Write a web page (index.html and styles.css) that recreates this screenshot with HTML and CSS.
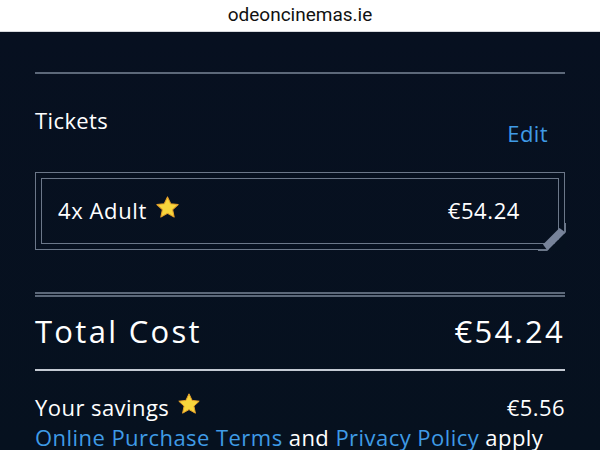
FILE: index.html
```html
<!DOCTYPE html>
<html>
<head>
<meta charset="utf-8">
<link rel="stylesheet" href="styles.css">
</head>
<body>
<div class="urlbar">odeoncinemas.ie</div>
<main class="page">
  <div class="rule rule-top"></div>
  <div class="tickets-head">
    <span class="label">Tickets</span>
    <a class="edit">Edit</a>
  </div>
  <div class="ticket-box">
    <div class="ticket-inner">
      <span class="ticket-name">4x Adult <svg class="star" viewBox="0 0 24 24" width="25" height="25"><path d="M12 1.8l3.1 6.6 7.1.8-5.3 4.9 1.5 7.1L12 17.6l-6.4 3.6 1.5-7.1L1.8 9.2l7.1-.8z" fill="#f8d63c" stroke="#e8a22a" stroke-width="1" stroke-linejoin="round"/></svg></span>
      <span class="ticket-price">€54.24</span>
    </div>
    <svg class="corner" viewBox="0 0 28 28" width="28" height="28"><polygon points="28,9 28,28 9,28" fill="#06111f"/><polygon points="21.5,5 27.5,9.5 9.5,27.5 5,21.5" fill="#77839a"/><line x1="27.25" y1="0" x2="27.25" y2="9.6" stroke="#6b7789" stroke-width="1.5"/><line x1="0" y1="27.25" x2="9.6" y2="27.25" stroke="#6b7789" stroke-width="1.5"/></svg>
  </div>
  <div class="rule-double"></div>
  <div class="total-row">
    <span>Total Cost</span>
    <span>€54.24</span>
  </div>
  <div class="rule rule-light"></div>
  <div class="savings-row">
    <span>Your savings <svg class="star small" viewBox="0 0 24 24" width="24" height="24"><path d="M12 1.8l3.1 6.6 7.1.8-5.3 4.9 1.5 7.1L12 17.6l-6.4 3.6 1.5-7.1L1.8 9.2l7.1-.8z" fill="#f8d63c" stroke="#e8a22a" stroke-width="1" stroke-linejoin="round"/></svg></span>
    <span>€5.56</span>
  </div>
  <p class="terms"><a>Online Purchase Terms</a> and <a>Privacy Policy</a> apply</p>
</main>
</body>
</html>
```
FILE: styles.css
```css
html, body {
  margin: 0;
  padding: 0;
  background: #06111f;
  overflow: hidden;
}
body {
  width: 600px;
  height: 450px;
  font-family: "Open Sans", "Noto Sans", sans-serif;
  color: #ffffff;
}
.urlbar {
  height: 32px;
  background: #ffffff;
  color: #111111;
  font-family: Roboto, sans-serif;
  font-size: 19px;
  line-height: 29px;
  text-align: center;
  border-bottom: 1px solid #d6d8dc;
  box-sizing: border-box;
}
.page {
  padding: 0 35px;
  background: linear-gradient(#071020, #06111f);
  height: 418px;
  overflow: hidden;
}
.rule {
  height: 2px;
  background: #5c6879;
}
.rule-top {
  margin-top: 40px;
}
.tickets-head {
  display: flex;
  justify-content: space-between;
  align-items: flex-start;
  margin-top: 32px;
  height: 66px;
  font-size: 22px;
  letter-spacing: 0.4px;
  line-height: 28px;
}
.edit {
  color: #3f9be6;
  margin-top: 13px;
  margin-right: 17px;
}
.ticket-box {
  position: relative;
  border: 1.5px solid #6b7789;
  padding: 5px;
  height: 66px;
}
.ticket-inner {
  border: 1.5px solid #6b7789;
  height: 63px;
  box-sizing: border-box;
  height: 66px;
  display: flex;
  justify-content: space-between;
  align-items: center;
  padding: 0 38px 3px 16px;
  font-size: 22px;
  letter-spacing: 0.6px;
}
.ticket-name {
  display: flex;
  align-items: center;
  gap: 8px;
}
.star {
  display: block;
  margin-top: -4px;
}
.corner {
  position: absolute;
  right: -1.5px;
  bottom: -1.5px;
}
.rule-double {
  margin-top: 42px;
  height: 1px;
  border-top: 2px solid #5c6879;
  border-bottom: 2px solid #5c6879;
}
.total-row {
  display: flex;
  justify-content: space-between;
  font-size: 31px;
  letter-spacing: 2.3px;
  line-height: 40px;
  margin-top: 14px;
  height: 58px;
}
.rule-light {
  background: #c4cad3;
  height: 2px;
}
.savings-row {
  display: flex;
  justify-content: space-between;
  font-size: 22px;
  letter-spacing: 0.45px;
  line-height: 28px;
  margin-top: 22px;
}
.savings-row span:first-child {
  display: flex;
  align-items: center;
  gap: 8px;
}
.star.small {
  margin-top: -6px;
}
.terms {
  margin: 2px 0 0;
  font-size: 22px;
  letter-spacing: 0.45px;
  line-height: 28px;
  white-space: nowrap;
}
.terms a {
  color: #3f9be6;
}
```
